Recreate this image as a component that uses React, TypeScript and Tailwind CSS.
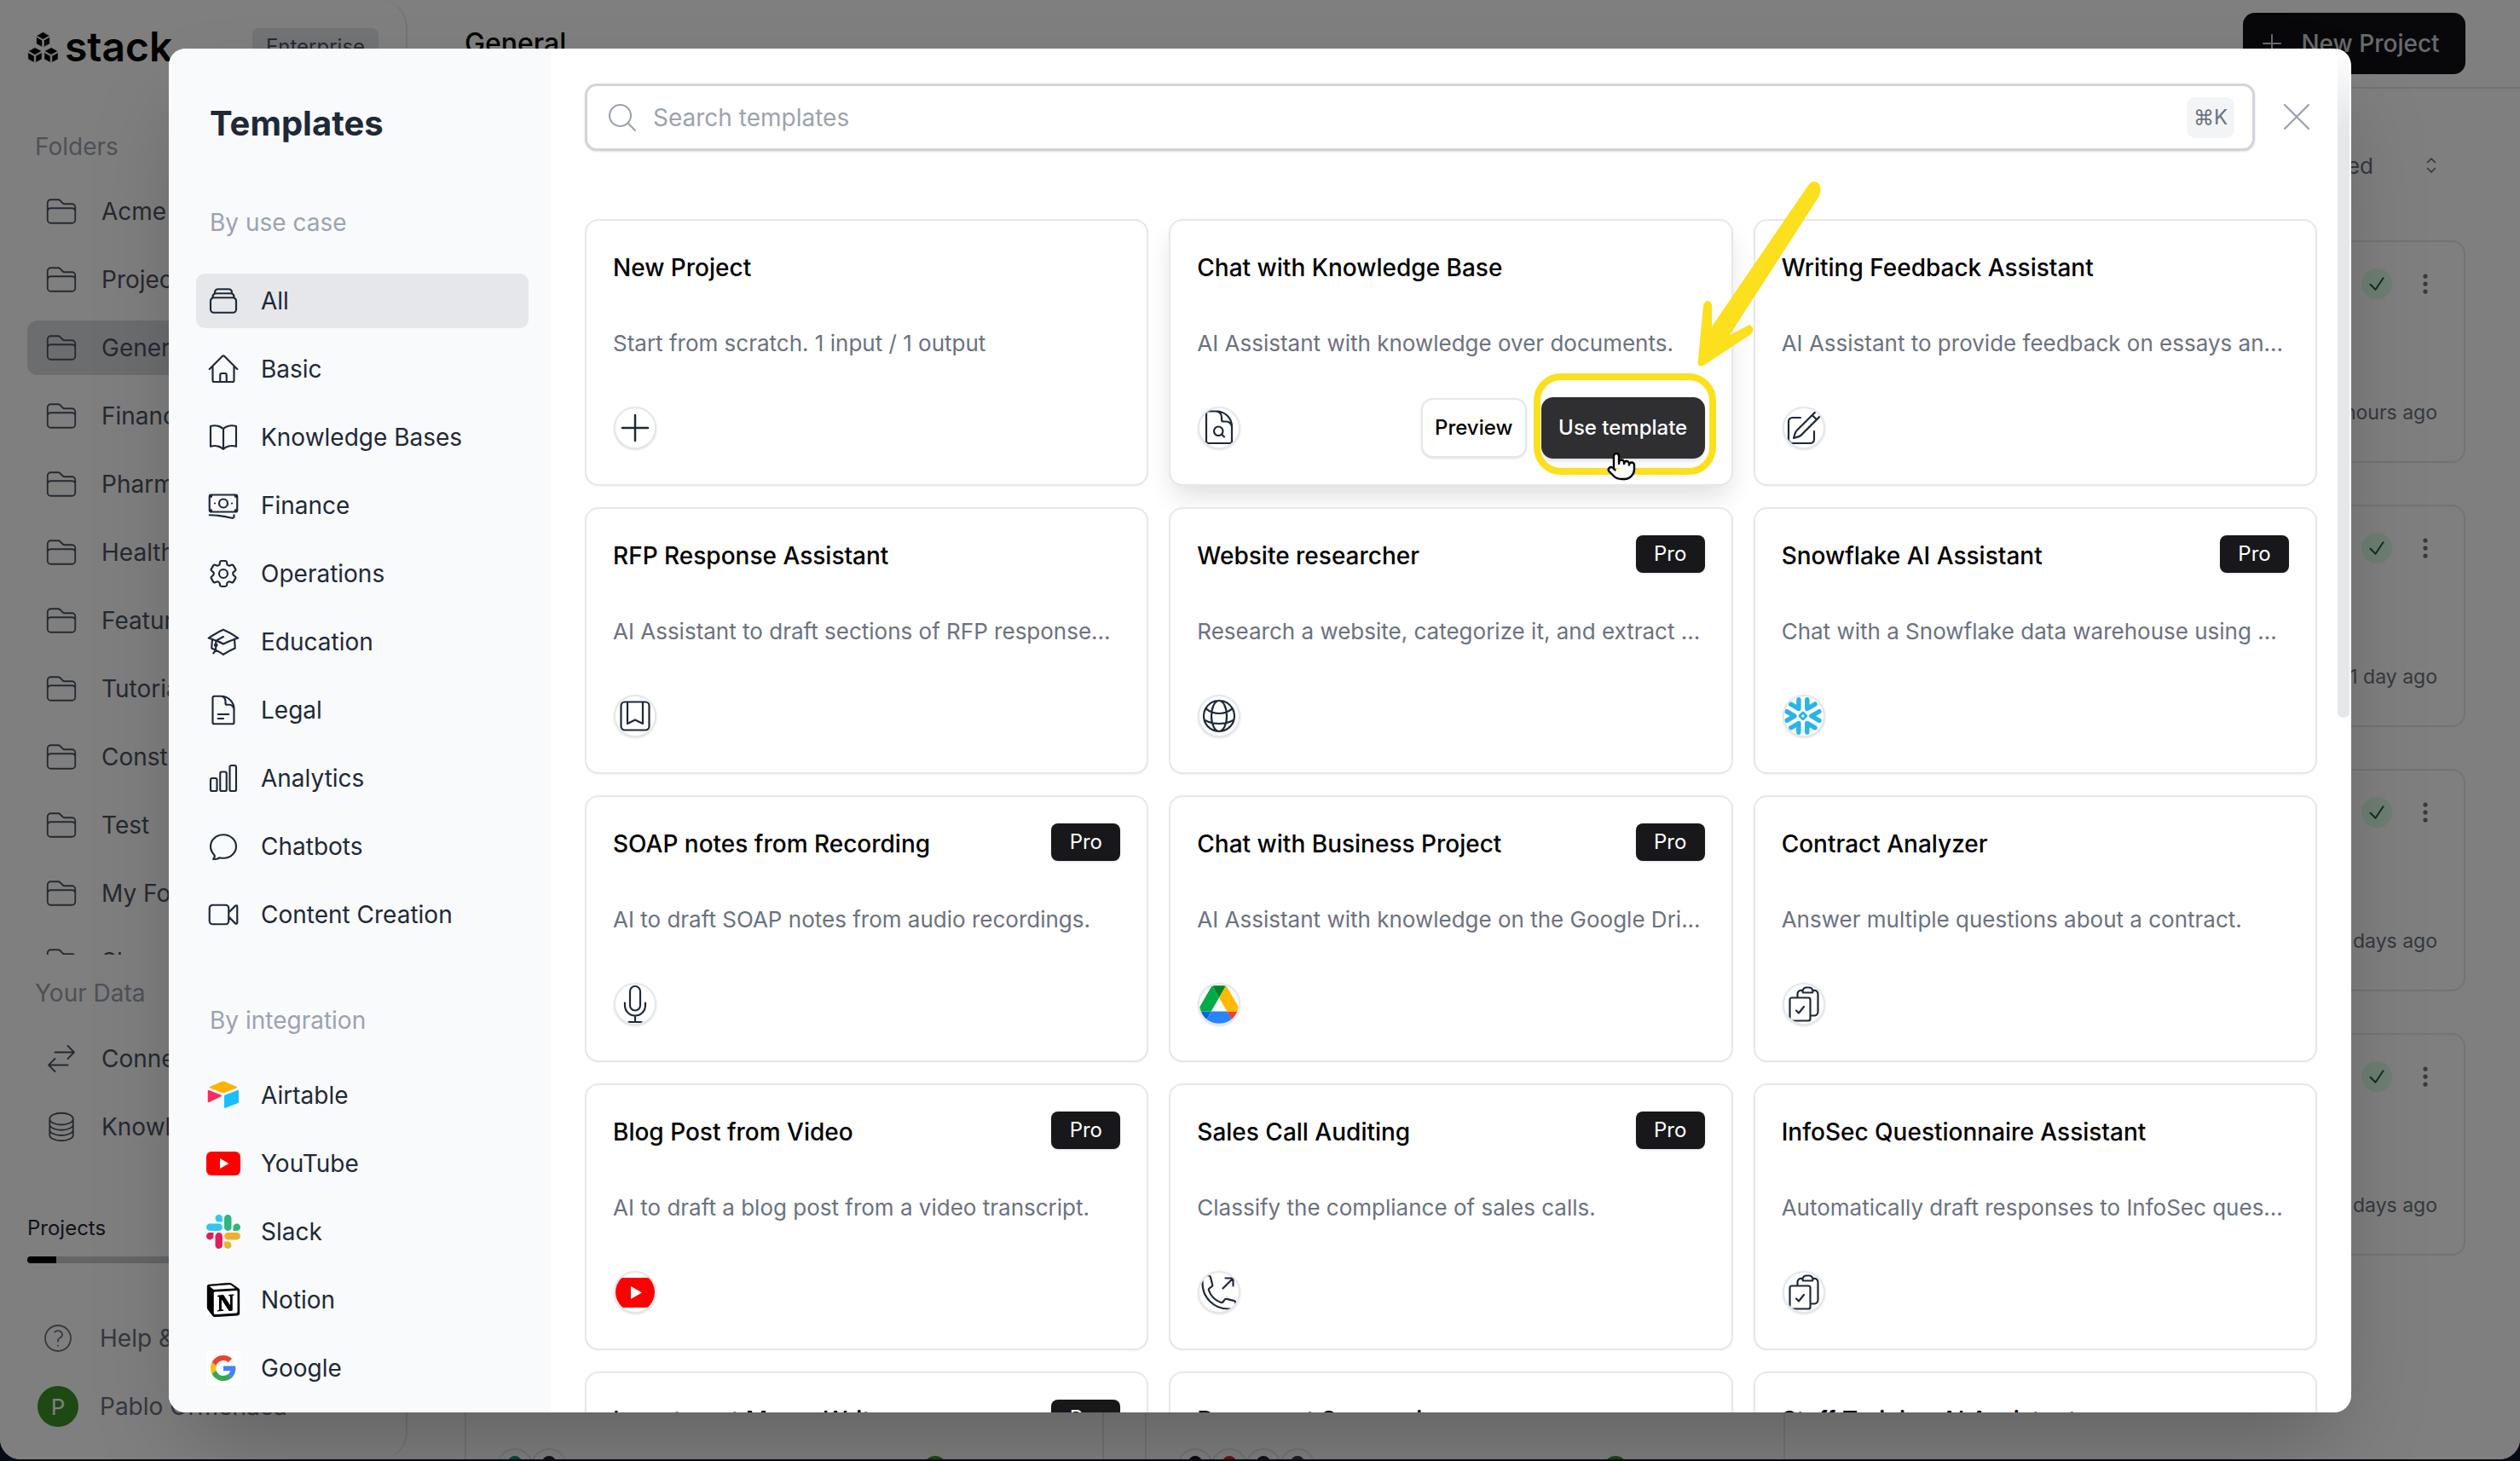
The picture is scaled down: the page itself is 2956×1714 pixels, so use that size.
import type { ReactNode } from 'react';
import { Pointer } from 'lucide-react';
import { SiNotion, SiSnowflake } from 'react-icons/si';
import {
  HiOutlineAcademicCap,
  HiOutlineArrowsRightLeft,
  HiOutlineBanknotes,
  HiOutlineBookOpen,
  HiOutlineBookmarkSquare,
  HiOutlineChartBar,
  HiOutlineChatBubbleOvalLeft,
  HiOutlineCircleStack,
  HiOutlineClipboardDocumentCheck,
  HiOutlineCog6Tooth,
  HiOutlineDocumentMagnifyingGlass,
  HiOutlineDocumentText,
  HiOutlineEllipsisVertical,
  HiOutlineFolder,
  HiOutlineGlobeAlt,
  HiOutlineHome,
  HiOutlineMagnifyingGlass,
  HiOutlineMicrophone,
  HiOutlinePencilSquare,
  HiOutlinePhoneArrowUpRight,
  HiOutlinePlus,
  HiOutlineQuestionMarkCircle,
  HiOutlineRectangleStack,
  HiOutlineVideoCamera,
  HiOutlineXMark,
  HiOutlineCheck,
  HiOutlineChevronUpDown,
} from 'react-icons/hi2';

const AirtableLogo = ({ className }: { className: string }) => (
  <svg viewBox="0 0 200 170" className={className}>
    <path fill="#fcb400" d="M90 5.6L22.4 33.6c-3.8 1.6-3.7 7 .1 8.5l67.9 26.9c6 2.4 12.6 2.4 18.6 0l67.9-26.9c3.8-1.5 3.9-6.9.1-8.5L109.1 5.6C103 3 96.2 3 90 5.6" />
    <path fill="#18bfff" d="M105.3 88v67.3c0 3.2 3.2 5.4 6.2 4.2l75.7-29.4c1.7-.7 2.9-2.4 2.9-4.2V58.6c0-3.2-3.2-5.4-6.2-4.2l-75.7 29.4c-1.8.7-2.9 2.4-2.9 4.2" />
    <path fill="#f82b60" d="M87.6 91.5L65.2 102.3l-2.3 1.1-47.4 22.7c-3 1.5-6.8-.7-6.8-4.1V58.9c0-1.2.6-2.3 1.4-3.1.3-.3.7-.6 1.1-.8 1.1-.7 2.7-.8 4-.3l71.8 28.5c3.7 1.4 4 6.6.6 8.3" />
  </svg>
);

const YoutubeLogo = ({ className }: { className: string }) => (
  <svg viewBox="0 0 40 28" className={className}>
    <rect width="40" height="28" rx="6" fill="#ff0000" />
    <path fill="#ffffff" d="M16 8l10.4 6L16 20z" />
  </svg>
);

const SlackLogo = ({ className }: { className: string }) => (
  <svg viewBox="0 0 122.8 122.8" className={className}>
    <path fill="#e01e5a" d="M25.8 77.6c0 7.1-5.8 12.9-12.9 12.9S0 84.7 0 77.6s5.8-12.9 12.9-12.9h12.9v12.9zm6.5 0c0-7.1 5.8-12.9 12.9-12.9s12.9 5.8 12.9 12.9v32.3c0 7.1-5.8 12.9-12.9 12.9s-12.9-5.8-12.9-12.9V77.6z" />
    <path fill="#36c5f0" d="M45.2 25.8c-7.1 0-12.9-5.8-12.9-12.9S38.1 0 45.2 0s12.9 5.8 12.9 12.9v12.9H45.2zm0 6.5c7.1 0 12.9 5.8 12.9 12.9s-5.8 12.9-12.9 12.9H12.9C5.8 58.1 0 52.3 0 45.2s5.8-12.9 12.9-12.9h32.3z" />
    <path fill="#2eb67d" d="M97 45.2c0-7.1 5.8-12.9 12.9-12.9s12.9 5.8 12.9 12.9-5.8 12.9-12.9 12.9H97V45.2zm-6.5 0c0 7.1-5.8 12.9-12.9 12.9s-12.9-5.8-12.9-12.9V12.9C64.7 5.8 70.5 0 77.6 0s12.9 5.8 12.9 12.9v32.3z" />
    <path fill="#ecb22e" d="M77.6 97c7.1 0 12.9 5.8 12.9 12.9s-5.8 12.9-12.9 12.9-12.9-5.8-12.9-12.9V97h12.9zm0-6.5c-7.1 0-12.9-5.8-12.9-12.9s5.8-12.9 12.9-12.9h32.3c7.1 0 12.9 5.8 12.9 12.9s-5.8 12.9-12.9 12.9H77.6z" />
  </svg>
);

const GoogleLogo = ({ className }: { className: string }) => (
  <svg viewBox="0 0 48 48" className={className}>
    <path fill="#ea4335" d="M24 9.5c3.54 0 6.71 1.22 9.21 3.6l6.85-6.85C35.9 2.38 30.47 0 24 0 14.62 0 6.51 5.38 2.56 13.22l7.98 6.19C12.43 13.72 17.74 9.5 24 9.5z" />
    <path fill="#4285f4" d="M46.98 24.55c0-1.57-.15-3.09-.38-4.55H24v9.02h12.94c-.58 2.96-2.26 5.48-4.78 7.18l7.73 6c4.51-4.18 7.09-10.36 7.09-17.65z" />
    <path fill="#fbbc05" d="M10.53 28.59c-.48-1.45-.76-2.99-.76-4.59s.27-3.14.76-4.59l-7.98-6.19C.92 16.46 0 20.12 0 24c0 3.88.92 7.54 2.56 10.78l7.97-6.19z" />
    <path fill="#34a853" d="M24 48c6.48 0 11.93-2.13 15.89-5.81l-7.73-6c-2.15 1.45-4.92 2.3-8.16 2.3-6.26 0-11.57-4.22-13.47-9.91l-7.98 6.19C6.51 42.62 14.62 48 24 48z" />
  </svg>
);

const DriveLogo = ({ className }: { className: string }) => (
  <svg viewBox="0 0 87.3 78" className={className}>
    <path fill="#0066da" d="m6.6 66.85 3.85 6.65c.8 1.4 1.95 2.5 3.3 3.3l13.75-23.8h-27.5c0 1.55.4 3.1 1.2 4.5z" />
    <path fill="#00ac47" d="m43.65 25-13.75-23.8c-1.35.8-2.5 1.9-3.3 3.3l-25.4 44a9.06 9.06 0 0 0 -1.2 4.5h27.5z" />
    <path fill="#ea4335" d="m73.55 76.8c1.35-.8 2.5-1.9 3.3-3.3l1.6-2.75 7.65-13.25c.8-1.4 1.2-2.95 1.2-4.5h-27.502l5.852 11.5z" />
    <path fill="#00832d" d="m43.65 25 13.75-23.8c-1.35-.8-2.9-1.2-4.5-1.2h-18.5c-1.6 0-3.15.45-4.5 1.2z" />
    <path fill="#2684fc" d="m59.8 53h-32.3l-13.75 23.8c1.35.8 2.9 1.2 4.5 1.2h50.8c1.6 0 3.15-.45 4.5-1.2z" />
    <path fill="#ffba00" d="m73.4 26.5-12.7-22c-.8-1.4-1.95-2.5-3.3-3.3l-13.75 23.8 16.15 28h27.45c0-1.55-.4-3.1-1.2-4.5z" />
  </svg>
);

// three stacked isometric cubes
const StackLogo = () => (
  <svg viewBox="0 0 37 37" className="w-[37px] h-[37px]">
    <g fill="#000000" stroke="#ffffff" strokeWidth="0.8" strokeLinejoin="round">
      <path d="M18.5 0.5l8 4.4-8 4.4-8-4.4z" />
      <path d="M10.5 6.2l7.2 4v8.2l-7.2-4z" />
      <path d="M26.5 6.2l-7.2 4v8.2l7.2-4z" />
      <path d="M9 18.6l8 4.4-8 4.4-8-4.4z" />
      <path d="M0.8 24.4l7.4 4.1v8l-7.4-4.1z" />
      <path d="M17.2 24.4l-7.4 4.1v8l7.4-4.1z" />
      <path d="M28 18.6l8 4.4-8 4.4-8-4.4z" />
      <path d="M19.8 24.4l7.4 4.1v8l-7.4-4.1z" />
      <path d="M36.2 24.4l-7.4 4.1v8l7.4-4.1z" />
    </g>
  </svg>
);

const useCases = [
  { label: 'All', icon: HiOutlineRectangleStack, active: true },
  { label: 'Basic', icon: HiOutlineHome },
  { label: 'Knowledge Bases', icon: HiOutlineBookOpen },
  { label: 'Finance', icon: HiOutlineBanknotes },
  { label: 'Operations', icon: HiOutlineCog6Tooth },
  { label: 'Education', icon: HiOutlineAcademicCap },
  { label: 'Legal', icon: HiOutlineDocumentText },
  { label: 'Analytics', icon: HiOutlineChartBar },
  { label: 'Chatbots', icon: HiOutlineChatBubbleOvalLeft },
  { label: 'Content Creation', icon: HiOutlineVideoCamera },
];

const integrations: { label: string; logo: ReactNode }[] = [
  { label: 'Airtable', logo: <AirtableLogo className="w-[40px] h-[34px]" /> },
  { label: 'YouTube', logo: <YoutubeLogo className="w-[40px] h-[28px]" /> },
  { label: 'Slack', logo: <SlackLogo className="w-[40px] h-[40px]" /> },
  { label: 'Notion', logo: <SiNotion className="w-[40px] h-[40px] text-black bg-white" /> },
  {
    label: 'Google',
    logo: (
      <div className="w-[40px] h-[40px] bg-white flex items-center justify-center">
        <GoogleLogo className="w-[30px] h-[30px]" />
      </div>
    ),
  },
];

const stroke = 'w-[48px] h-[48px] shrink-0 text-gray-800';

const templates: { title: string; desc: string; icon: ReactNode; pro?: boolean; hovered?: boolean }[] = [
  { title: 'New Project', desc: 'Start from scratch. 1 input / 1 output', icon: <HiOutlinePlus className={stroke} strokeWidth={1.25} /> },
  { title: 'Chat with Knowledge Base', desc: 'AI Assistant with knowledge over documents.', icon: <HiOutlineDocumentMagnifyingGlass className={stroke} strokeWidth={1.1} />, hovered: true },
  { title: 'Writing Feedback Assistant', desc: 'AI Assistant to provide feedback on essays an...', icon: <HiOutlinePencilSquare className={stroke} strokeWidth={1.1} /> },
  { title: 'RFP Response Assistant', desc: 'AI Assistant to draft sections of RFP response...', icon: <HiOutlineBookmarkSquare className={stroke} strokeWidth={1.1} /> },
  { title: 'Website researcher', desc: 'Research a website, categorize it, and extract ...', icon: <HiOutlineGlobeAlt className={stroke} strokeWidth={1.1} />, pro: true },
  { title: 'Snowflake AI Assistant', desc: 'Chat with a Snowflake data warehouse using ...', icon: <SiSnowflake className="w-[46px] h-[46px] text-[#29b5e8]" />, pro: true },
  { title: 'SOAP notes from Recording', desc: 'AI to draft SOAP notes from audio recordings.', icon: <HiOutlineMicrophone className={stroke} strokeWidth={1.1} />, pro: true },
  { title: 'Chat with Business Project', desc: 'AI Assistant with knowledge on the Google Dri...', icon: <DriveLogo className="w-[50px] h-[45px] shrink-0" />, pro: true },
  { title: 'Contract Analyzer', desc: 'Answer multiple questions about a contract.', icon: <HiOutlineClipboardDocumentCheck className={stroke} strokeWidth={1.1} /> },
  { title: 'Blog Post from Video', desc: 'AI to draft a blog post from a video transcript.', icon: <YoutubeLogo className="w-[50px] h-[35px] shrink-0" />, pro: true },
  { title: 'Sales Call Auditing', desc: 'Classify the compliance of sales calls.', icon: <HiOutlinePhoneArrowUpRight className={stroke} strokeWidth={1.1} />, pro: true },
  { title: 'InfoSec Questionnaire Assistant', desc: 'Automatically draft responses to InfoSec ques...', icon: <HiOutlineClipboardDocumentCheck className={stroke} strokeWidth={1.1} /> },
  { title: 'Investment Memo Writer', desc: 'AI to draft an investment memo from documents.', icon: <HiOutlineDocumentText className={stroke} />, pro: true },
  { title: 'Document Summarizer', desc: 'Summarize long documents.', icon: <HiOutlineDocumentText className={stroke} /> },
  { title: 'Staff Training AI Assistant', desc: 'Answer staff questions from training material.', icon: <HiOutlineBookOpen className={stroke} /> },
];

const TemplateCard = ({ title, desc, icon, pro, hovered }: (typeof templates)[number]) => (
  <div className={`relative h-[313px] rounded-[16px] border-2 border-[#e5e7eb] bg-white px-[31px] ${hovered ? 'shadow-[0_16px_32px_-6px_rgba(0,0,0,0.14)]' : 'shadow-[0_1px_2px_rgba(0,0,0,0.05)]'}`}>
    <div className="flex justify-between items-start pt-[31px] h-[90px]">
      <div className="text-[28px] leading-[48px] font-medium text-black">{title}</div>
      {pro && (
        <div className="w-[81px] h-[44px] rounded-[8px] bg-[#18181b] text-white text-[24px] flex items-center justify-center shadow-sm">Pro</div>
      )}
    </div>
    <div className="text-[26px] leading-[40px] text-[#6b7280] mt-[34px] whitespace-nowrap">{desc}</div>
    <div className="flex items-center justify-between mt-[54px] h-[50px]">
      <div className="ml-[1px] w-[50px] h-[50px] rounded-full border-2 border-[#e5e7eb] bg-white flex items-center justify-center overflow-hidden shadow-sm">
        {icon}
      </div>
      {hovered && (
        <div className="flex items-center gap-[17px]">
          <div className="w-[124px] h-[70px] rounded-[14px] border-2 border-[#e5e7eb] bg-white text-[24px] font-medium text-black flex items-center justify-center shadow-sm">Preview</div>
          <div className="w-[192px] h-[72px] rounded-[14px] bg-[#2f2f31] text-[24px] font-medium text-white flex items-center justify-center shadow-md">Use template</div>
        </div>
      )}
    </div>
  </div>
);

const folders = ['Acme Corp', 'Projects', 'General', 'Finance', 'Pharma', 'Healthcare', 'Features', 'Tutorials', 'Construction', 'Test', 'My Folder', 'Shared'];

const BackgroundSidebar = () => (
  <div className="w-[478px] h-full shrink-0 bg-white rounded-r-[32px] border-r-2 border-[#e5e7eb] flex flex-col px-[32px]">
    <div className="flex items-center h-[88px] pt-[22px] justify-between">
      <div className="flex items-center gap-[7px]">
        <StackLogo />
        <span className="text-[48px] font-semibold text-black leading-none">stack</span>
      </div>
      <div className="w-[148px] h-[44px] rounded-[8px] bg-[#e5e7eb] text-[24px] text-[#4b5563] flex items-center justify-center">Enterprise</div>
    </div>
    <div className="text-[28px] leading-[40px] text-[#9ca3af] pl-[9px] mt-[64px]">Folders</div>
    <div className="mt-[24px] h-[904px] overflow-hidden flex flex-col gap-[16px]">
      {folders.map(name => (
        <div key={name} className={`h-[64px] shrink-0 rounded-[12px] flex items-center pl-[20px] gap-[27px] text-[28px] text-[#4b5563] ${name === 'General' ? 'bg-[#d8dbdf]' : ''}`}>
          <HiOutlineFolder className="w-[40px] h-[40px]" strokeWidth={1.1} />
          {name}
        </div>
      ))}
    </div>
    <div className="text-[28px] leading-[40px] text-[#9ca3af] pl-[9px] mt-[25px]">Your Data</div>
    <div className="mt-[25px] flex flex-col gap-[16px]">
      <div className="h-[64px] flex items-center pl-[20px] gap-[27px] text-[28px] text-[#4b5563]">
        <HiOutlineArrowsRightLeft className="w-[40px] h-[40px]" strokeWidth={1.1} />
        Connections
      </div>
      <div className="h-[64px] flex items-center pl-[20px] gap-[27px] text-[28px] text-[#4b5563]">
        <HiOutlineCircleStack className="w-[40px] h-[40px]" strokeWidth={1.1} />
        Knowledge Bases
      </div>
    </div>
    <div className="text-[24px] leading-[32px] text-[#1f2937] mt-[71px]">Projects</div>
    <div className="mt-[17px] h-[8px] rounded-full bg-[#c8cacf] overflow-hidden">
      <div className="h-full w-[34px] bg-black" />
    </div>
    <div className="mt-[56px] flex items-center pl-[16px] gap-[29px] h-[64px] text-[28px] text-[#6b7280]">
      <HiOutlineQuestionMarkCircle className="w-[40px] h-[40px]" strokeWidth={1.1} />
      Help &amp; Support
    </div>
    <div className="mt-[24px] flex items-center pl-[12px] gap-[25px] h-[48px] text-[28px] text-[#6b7280]">
      <div className="w-[48px] h-[48px] rounded-full bg-[#3d9324] text-white text-[26px] flex items-center justify-center">P</div>
      Pablo Ormenaca
    </div>
  </div>
);

const projectRows = ['2 hours ago', '1 day ago', '3 days ago', '4 days ago'];

const BackgroundCard = ({ time }: { time?: string }) => (
  <div className="h-[261px] rounded-[16px] border-2 border-[#e5e7eb] bg-white">
    {time && (
      <>
        <div className="flex justify-end items-center gap-[21px] pt-[31px] pr-[27px]">
          <div className="w-[36px] h-[36px] rounded-full bg-[#dcfce7] text-[#166534] flex items-center justify-center">
            <HiOutlineCheck className="w-[24px] h-[24px]" strokeWidth={2} />
          </div>
          <HiOutlineEllipsisVertical className="w-[36px] h-[36px] text-[#6b7280]" strokeWidth={2} />
        </div>
        <div className="text-right text-[23px] leading-[36px] text-[#6b7280] mt-[115px] pr-[31px]">{time}</div>
      </>
    )}
  </div>
);

const BottomCard = ({ avatars, dotLeft }: { avatars: string[]; dotLeft: string }) => (
  <div className="h-[261px] rounded-[16px] border-2 border-[#e5e7eb] bg-white flex items-start pt-[175px] pl-[36px]">
    <div className="flex">
      {avatars.map((color, i) => (
        <div key={i} className="w-[42px] h-[42px] -mr-[2px] rounded-full border-2 border-[#e5e7eb] bg-white flex justify-center pt-[7px]">
          <div className="w-[16px] h-[16px] rounded-full" style={{ backgroundColor: color }} />
        </div>
      ))}
    </div>
    <div className={`w-[28px] h-[28px] rounded-full bg-[#3d9324] mt-[9px] ${dotLeft}`} />
  </div>
);

const BackgroundMain = () => (
  <div className="flex-1 h-full flex flex-col bg-white">
    <div className="h-[104px] shrink-0 border-b-2 border-[#e5e7eb] flex items-center justify-between pl-[67px] pr-[64px]">
      <div className="text-[32px] font-medium text-black">General</div>
      <div className="w-[261px] h-[72px] rounded-[14px] bg-[#111114] text-[#d1d5db] text-[28px] font-medium flex items-center justify-center gap-[18px] pr-[12px]">
        <HiOutlinePlus className="w-[32px] h-[32px]" />
        New Project
      </div>
    </div>
    <div className="flex shrink-0 justify-end items-center h-[72px] mt-[54px] pr-[90px] gap-[54px] text-[26px] text-[#6b7280]">
      Last edited
      <HiOutlineChevronUpDown className="w-[28px] h-[28px]" />
    </div>
    <div className="grid shrink-0 grid-cols-3 gap-x-[48px] gap-y-[49px] pl-[67px] pr-[64px] mt-[52px]">
      {projectRows.flatMap(time => [
        <BackgroundCard key={`${time}-1`} />,
        <BackgroundCard key={`${time}-2`} />,
        <BackgroundCard key={`${time}-3`} time={time} />,
      ])}
      <BottomCard avatars={['#0d9488', '#1f2937']} dotLeft="ml-[420px]" />
      <BottomCard avatars={['#111827', '#dc2626', '#1f2937', '#374151']} dotLeft="ml-[340px]" />
    </div>
  </div>
);

const App = () => {
  return (
    <div className="relative w-[2956px] h-[1714px] overflow-hidden bg-[#0f172a] font-['Inter','DejaVu_Sans',sans-serif]">
      <div className="h-[1712px] rounded-b-[24px] bg-white flex overflow-hidden">
        <BackgroundSidebar />
        <BackgroundMain />
      </div>
      <div className="absolute inset-0 bg-black/50" />

      <div className="absolute left-[198px] top-[57px] w-[2560px] h-[1600px] rounded-[20px] bg-white flex overflow-hidden shadow-[0_50px_100px_-24px_rgba(0,0,0,0.25)]">
        <aside className="w-[448px] shrink-0 bg-[#f9fafc] pl-[32px] pr-[26px] pt-[64px]">
          <div className="pl-[16px] text-[40px] leading-[48px] font-bold text-[#1f2937]">Templates</div>
          <div className="pl-[16px] mt-[72px] text-[28px] leading-[40px] text-[#9ca3af]">By use case</div>
          <div className="mt-[40px] flex flex-col gap-[16px]">
            {useCases.map(({ label, icon: Icon, active }) => (
              <div key={label} className={`h-[64px] rounded-[10px] flex items-center pl-[12px] gap-[24px] text-[28px] text-[#1f2937] ${active ? 'bg-[#e5e7eb]' : ''}`}>
                <Icon className="w-[40px] h-[40px]" strokeWidth={1.3} />
                {label}
              </div>
            ))}
          </div>
          <div className="pl-[16px] mt-[72px] text-[28px] leading-[40px] text-[#9ca3af]">By integration</div>
          <div className="mt-[36px] flex flex-col gap-[16px]">
            {integrations.map(({ label, logo }) => (
              <div key={label} className="h-[64px] flex items-center pl-[12px] gap-[24px] text-[28px] text-[#1f2937]">
                <div className="w-[40px] flex justify-center">{logo}</div>
                {label}
              </div>
            ))}
          </div>
        </aside>

        <div className="relative flex-1 min-w-0 pl-[40px] pt-[41px]">
          <div className="flex items-center">
            <div className="w-[1959px] shrink-0 h-[79px] rounded-[14px] border-[3px] border-[#d1d5db] bg-white shadow-sm flex items-center pl-[21px] pr-[21px] gap-[16px]">
              <HiOutlineMagnifyingGlass className="w-[40px] h-[40px] text-[#9ca3af]" strokeWidth={1.25} />
              <span className="flex-1 text-[28px] text-[#9ca3af]">Search templates</span>
              <div className="w-[56px] h-[48px] rounded-[10px] bg-[#f3f4f6] text-[24px] text-[#6b7280] flex items-center justify-center">⌘K</div>
            </div>
            <HiOutlineXMark className="ml-[21px] -mt-[2px] shrink-0 w-[56px] h-[56px] text-[#9ca3af]" strokeWidth={1} />
          </div>
          <div className="mt-[80px] w-[2032px] grid grid-cols-3 gap-x-[24px] gap-y-[25px]">
            {templates.map(template => (
              <TemplateCard key={template.title} {...template} />
            ))}
          </div>
          {/* scrollbar thumb */}
          <div className="absolute right-[2px] top-0 w-[14px] h-[785px] rounded-b-full bg-gradient-to-b from-white to-[#e5e7eb] to-[12%]" />
        </div>
      </div>

      {/* yellow call-out painted on the screenshot */}
      <div className="absolute left-[1799px] top-[438px] w-[214px] h-[119px] rounded-[32px] border-[8px] border-[#fcdf1d]" />
      <svg className="absolute left-[1980px] top-[200px] w-[170px] h-[240px]" viewBox="1980 200 170 240">
        <path fill="#fcdf1d" d="M2118 222 Q2126 208 2134 216 Q2137 222 2134 230 L2029 393 L2052 381 Q2060 386 2054 392 L1998 429 Q1990 431 1992 422 L1998 358 Q2003 348 2008 357 L2008 383 Z" />
      </svg>
      <Pointer className="absolute left-[1884px] top-[528px] w-[36px] h-[38px] text-black" fill="#ffffff" strokeWidth={1.6} />
    </div>
  );
};

export default App;
